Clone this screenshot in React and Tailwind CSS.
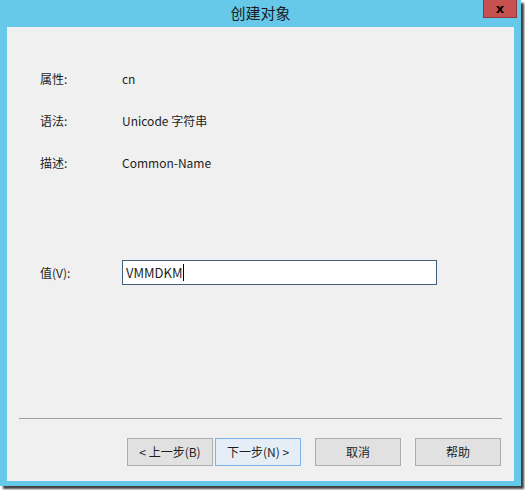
import React from 'react'

const FONT = { fontFamily: '"Noto Sans CJK SC", "Noto Sans", sans-serif' }

const rows = [
  { label: '属性:', value: 'cn' },
  { label: '语法:', value: 'Unicode 字符串' },
  { label: '描述:', value: 'Common-Name' },
]

function Btn({ children, focused }) {
  return (
    <button
      type="button"
      className={`w-[86px] h-[28px] text-[12px] text-[#1e1e1e] flex items-center justify-center border ${focused ? 'border-[#7eb4ea] bg-[#e5eef7]' : 'border-[#adadad] bg-[#e1e1e1]'}`}
    >
      {children}
    </button>
  )
}

export default function App() {
  return (
    <div className="w-[525px] h-[490px] bg-white" style={FONT}>
      <div className="w-[521px] h-[486px] bg-[#66c9ea] flex flex-col shadow-[3px_3px_2px_rgba(0,0,0,0.75)]">
        {/* Title bar */}
        <div className="relative h-[27px] flex items-center justify-center">
          <span className="text-[15px] text-[#1a1a1a] leading-none -mt-[3px]">创建对象</span>
          <div className="absolute right-[4px] top-0 w-[34px] h-[18px] bg-[#c75050] border border-t-0 border-[#8a3a3a] flex items-center justify-center">
            <span className="text-[13px] font-bold text-black leading-none" style={{ fontFamily: '"DejaVu Sans", sans-serif' }}>x</span>
          </div>
        </div>

        {/* Body */}
        <div className="flex-1 mx-[7px] mb-[5px] bg-[#f0f0f0] flex flex-col">
          <div className="pl-[33px] pt-[44px] flex flex-col gap-[26px]">
            {rows.map(r => (
              <div key={r.label} className="flex items-center h-[16px] text-[12px] text-[#1e1e1e]">
                <span className="w-[82px]">{r.label}</span>
                <span>{r.value}</span>
              </div>
            ))}
          </div>

          <div className="pl-[33px] mt-[89px] flex items-center text-[12px] text-[#1e1e1e]">
            <span className="w-[82px]">值(V):</span>
            <div className="w-[315px] h-[25px] bg-white border border-[#3f5f7f] flex items-center pl-[3px] text-[13px]">
              <span>VMMDKM</span>
              <span className="w-px h-[17px] bg-black" />
            </div>
          </div>

          <div className="flex-1" />

          <div className="mx-[12px] h-px bg-[#a0a0a0]" />

          <div className="flex justify-end gap-[2px] pr-[13px] mt-[19px] mb-[15px]">
            <Btn>&lt; 上一步(B)</Btn>
            <Btn focused>下一步(N) &gt;</Btn>
            <div className="w-[10px]" />
            <Btn>取消</Btn>
            <div className="w-[10px]" />
            <Btn>帮助</Btn>
          </div>
        </div>
      </div>
    </div>
  )
}
